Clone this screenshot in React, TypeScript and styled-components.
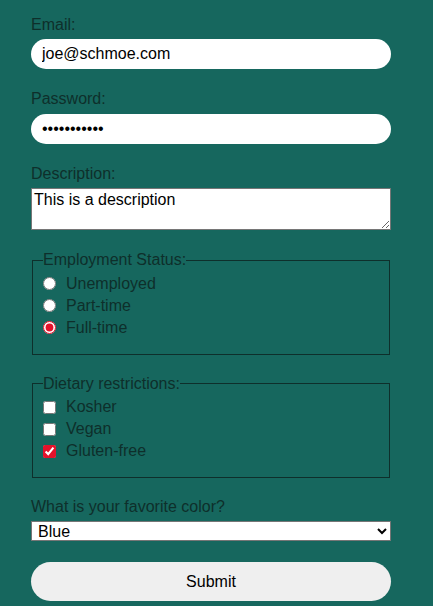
import React from "react";
import styled, { createGlobalStyle } from "styled-components";

const Global = createGlobalStyle`
  html, body {
    margin: 0;
    padding: 0;
    background: #16675e;
  }
  body {
    font-family: "Liberation Sans", Arial, sans-serif;
    font-size: 16px;
    color: #0e2f2b;
  }
`;

const Page = styled.div`
  padding: 16px 0 0 31px;
  min-height: 606px;
  box-sizing: border-box;
`;

const Form = styled.form`
  width: 360px;
  display: flex;
  flex-direction: column;
`;

const Group = styled.div`
  display: flex;
  flex-direction: column;
  margin-bottom: 21px;
`;

const Label = styled.label`
  display: block;
  line-height: 18.4px;
  margin-bottom: 5px;
`;

const TextInput = styled.input`
  box-sizing: border-box;
  width: 360px;
  height: 30px;
  border: none;
  border-radius: 15px;
  background: #fff;
  padding: 0 11px;
  margin: 0;
  font-family: "Liberation Sans", Arial, sans-serif;
  font-size: 16px;
  color: #000;
  outline: none;
`;

const TextArea = styled.textarea`
  box-sizing: border-box;
  width: 360px;
  height: 42px;
  border: 1px solid #767676;
  padding: 2px;
  margin: 0;
  display: block;
  font-family: "Liberation Sans", Arial, sans-serif;
  font-size: 16px;
  line-height: 18.4px;
  color: #000;
  background: #fff;
`;

const FieldSet = styled.fieldset`
  margin: 0 1px 20px 1px;
  border: 1px solid #0e2f2b;
  padding: 3px 10px 15px 10px;
  min-width: 0;
`;

const Legend = styled.legend`
  padding: 0;
  line-height: 18.4px;
`;

const Option = styled.label`
  display: flex;
  align-items: center;
  gap: 10px;
  height: 22px;
`;

const Radio = styled.input.attrs({ type: "radio" })`
  width: 13px;
  height: 13px;
  margin: 0;
  accent-color: #e3122b;
`;

const Check = styled.input.attrs({ type: "checkbox" })`
  width: 13px;
  height: 13px;
  margin: 0;
  accent-color: #e3122b;
`;

const Select = styled.select`
  box-sizing: border-box;
  width: 360px;
  height: 20px;
  margin: 0;
  padding: 0 0 0 2px;
  border: 1px solid #767676;
  border-radius: 0;
  background: #fff;
  font-family: "Liberation Sans", Arial, sans-serif;
  font-size: 16px;
  color: #000;
`;

const Submit = styled.button`
  box-sizing: border-box;
  width: 360px;
  height: 39px;
  border: none;
  border-radius: 20px;
  background: #efefef;
  font-family: "Liberation Sans", Arial, sans-serif;
  font-size: 16px;
  color: #000;
  cursor: pointer;
`;

export default function App() {
  return (
    <>
      <Global />
      <Page>
        <Form onSubmit={(e) => e.preventDefault()}>
          <Group>
            <Label htmlFor="email">Email:</Label>
            <TextInput id="email" type="email" defaultValue="joe@schmoe.com" />
          </Group>
          <Group>
            <Label htmlFor="password">Password:</Label>
            <TextInput id="password" type="password" defaultValue="secretpassw" />
          </Group>
          <Group>
            <Label htmlFor="description">Description:</Label>
            <TextArea id="description" defaultValue="This is a description" />
          </Group>
          <FieldSet>
            <Legend>Employment Status:</Legend>
            <Option>
              <Radio name="employment" value="unemployed" />
              Unemployed
            </Option>
            <Option>
              <Radio name="employment" value="part-time" />
              Part-time
            </Option>
            <Option>
              <Radio name="employment" value="full-time" defaultChecked />
              Full-time
            </Option>
          </FieldSet>
          <FieldSet>
            <Legend>Dietary restrictions:</Legend>
            <Option>
              <Check name="kosher" />
              Kosher
            </Option>
            <Option>
              <Check name="vegan" />
              Vegan
            </Option>
            <Option>
              <Check name="gluten" defaultChecked />
              Gluten-free
            </Option>
          </FieldSet>
          <Group>
            <Label htmlFor="color">What is your favorite color?</Label>
            <Select id="color" defaultValue="blue">
              <option value="red">Red</option>
              <option value="green">Green</option>
              <option value="blue">Blue</option>
            </Select>
          </Group>
          <Submit type="submit">Submit</Submit>
        </Form>
      </Page>
    </>
  );
}
